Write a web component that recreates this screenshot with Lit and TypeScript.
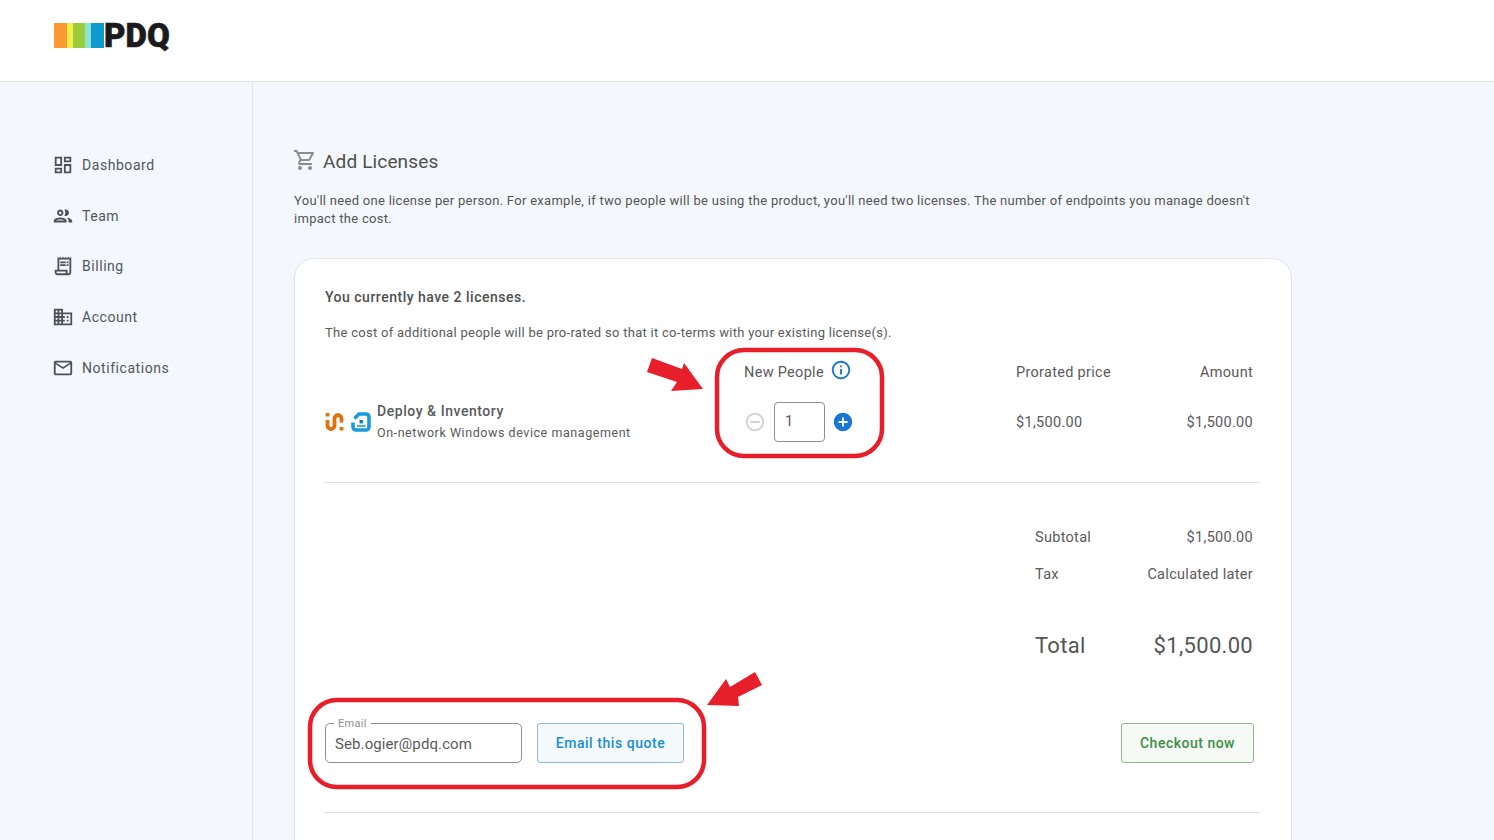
import { LitElement, html, css, svg } from "lit";
import { customElement } from "lit/decorators.js";

const NAV = [
  ["Dashboard", "M19 5v2h-4V5h4M9 5v6H5V5h4m10 8v6h-4v-6h4M9 17v2H5v-2h4M21 3h-8v6h8V3zM11 3H3v10h8V3zm10 8h-8v10h8V11zm-10 4H3v6h8v-6z"],
  ["Team", "M9 13.75c-2.34 0-7 1.17-7 3.5V19h14v-1.75c0-2.33-4.66-3.5-7-3.5zM4.34 17c.84-.58 2.87-1.25 4.66-1.25s3.82.67 4.66 1.25H4.34zM9 12c1.93 0 3.5-1.57 3.5-3.5S10.93 5 9 5 5.5 6.57 5.5 8.5 7.07 12 9 12zm0-5c.83 0 1.5.67 1.5 1.5S9.83 10 9 10s-1.5-.67-1.5-1.5S8.17 7 9 7zm7.04 6.81c1.16.84 1.96 1.96 1.96 3.44V19h4v-1.75c0-2.02-3.5-3.17-5.96-3.44zM15 12c1.93 0 3.5-1.57 3.5-3.5S16.93 5 15 5c-.54 0-1.04.13-1.5.35.63.89 1 1.98 1 3.15s-.37 2.26-1 3.15c.46.22.96.35 1.5.35z"],
  ["Billing", "M19.5 3.5 18 2l-1.5 1.5L15 2l-1.5 1.5L12 2l-1.5 1.5L9 2 7.5 3.5 6 2v14H3v3c0 1.66 1.34 3 3 3h12c1.66 0 3-1.34 3-3V2l-1.5 1.5zM15 20H6c-.55 0-1-.45-1-1v-1h10v2zm4-1c0 .55-.45 1-1 1s-1-.45-1-1v-3H8V5h11v14zM9 7h6v2H9zM16 7h2v2h-2zM9 10h6v2H9zM16 10h2v2h-2z"],
  ["Account", "M12 7V3H2v18h20V7H12zM6 19H4v-2h2v2zm0-4H4v-2h2v2zm0-4H4V9h2v2zm0-4H4V5h2v2zm4 12H8v-2h2v2zm0-4H8v-2h2v2zm0-4H8V9h2v2zm0-4H8V5h2v2zm10 12h-8v-2h2v-2h-2v-2h2v-2h-2V9h8v10zm-2-8h-2v2h2v-2zm0 4h-2v2h2v-2z"],
  ["Notifications", "M20 4H4c-1.1 0-1.99.9-1.99 2L2 18c0 1.1.9 2 2 2h16c1.1 0 2-.9 2-2V6c0-1.1-.9-2-2-2zm0 14H4V8l8 5 8-5v10zm-8-7L4 6h16l-8 5z"],
];

const CART = "M15.55 13c.75 0 1.41-.41 1.75-1.03l3.58-6.49c.37-.66-.11-1.48-.87-1.48H5.21l-.94-2H1v2h2l3.6 7.59-1.35 2.44C4.52 15.37 5.48 17 7 17h12v-2H7l1.1-2h7.45zM6.16 6h12.15l-2.76 5H8.53L6.16 6zM7 18c-1.1 0-1.99.9-1.99 2S5.9 22 7 22s2-.9 2-2-.9-2-2-2zm10 0c-1.1 0-1.99.9-1.99 2s.89 2 1.99 2 2-.9 2-2-.9-2-2-2z";
const INFO = "M11 7h2v2h-2zm0 4h2v6h-2zm1-9C6.48 2 2 6.48 2 12s4.48 10 10 10 10-4.48 10-10S17.52 2 12 2zm0 18c-4.41 0-8-3.59-8-8s3.59-8 8-8 8 3.59 8 8-3.59 8-8 8z";
const MINUS = "M7 11v2h10v-2H7zm5-9C6.48 2 2 6.48 2 12s4.48 10 10 10 10-4.48 10-10S17.52 2 12 2zm0 18c-4.41 0-8-3.59-8-8s3.59-8 8-8 8 3.59 8 8-3.59 8-8 8z";
const PLUS = "M12 2C6.48 2 2 6.48 2 12s4.48 10 10 10 10-4.48 10-10S17.52 2 12 2zm5 11h-4v4h-2v-4H7v-2h4V7h2v4h4v2z";

const icon = (d: string, cls: string) => html`<svg class=${cls} viewBox="0 0 24 24"><path d=${d}></path></svg>`;

@customElement("app-root")
export class AppRoot extends LitElement {
  static styles = css`
    :host { display: block; height: 840px; overflow: hidden; position: relative; background: #f4f8fc; font-family: Roboto, sans-serif; color: #4a4a4a; letter-spacing: 0.4px; }
    svg { display: block; fill: currentColor; flex: none; }
    header { height: 58px; background: #fff; border-bottom: 1px solid #e3e6e9; padding: 23px 0 0 54px; }
    .logo { display: flex; height: 25px; align-items: stretch; }
    .logo i { display: block; }
    .o { width: 13px; background: #fb9a33; }
    .y { width: 6px; background: #f7ee4a; }
    .g { width: 12px; background: #9ccb3b; }
    .c { width: 6px; background: #8fe5d5; }
    .b { width: 13px; background: #0f9bd2; }
    .pdq { font: 900 33px/25px Roboto, sans-serif; letter-spacing: 0.1px; color: #1b1b1d; -webkit-text-stroke: 0.6px #1b1b1d; }
    .body { display: flex; height: 758px; }
    aside { width: 200px; flex: none; border-right: 1px solid #e3e6e9; padding: 58px 0 0 52px; }
    .nav { display: flex; align-items: center; gap: 8px; height: 50.6px; font-size: 14px; color: #50565c; letter-spacing: 0.55px; }
    .nav svg { width: 22px; height: 22px; color: #4c5258; }
    main { flex: 1; padding: 66px 0 0 41px; min-width: 0; }
    .col { width: 998px; }
    h1 { display: flex; align-items: center; gap: 6px; margin: 0; font-size: 19px; font-weight: 400; line-height: 28px; color: #4f4f4f; letter-spacing: 0.15px; }
    h1 svg { width: 24px; height: 24px; color: #8c8c8c; margin-left: -1px; margin-top: -5px; }
    .intro { margin: 16px 0 0; font-size: 13px; line-height: 18px; color: #555; letter-spacing: 0.29px; }
    .card { margin-top: 30px; height: 640px; box-sizing: border-box; background: #fff; border: 1px solid #dfe3e8; border-radius: 20px; padding: 28px 30px 0 30px; }
    .have { font-size: 14px; font-weight: 500; line-height: 20px; letter-spacing: 0.5px; color: #4f4f4f; }
    .cost { margin-top: 17px; font-size: 13px; line-height: 18px; color: #5a5a5a; letter-spacing: 0.28px; }
    .table { display: grid; grid-template-columns: 420px 271px 1fr 137px; width: 936px; margin-top: 15px; }
    .hd { font-size: 14.5px; line-height: 20px; height: 45px; color: #5a5a5a; letter-spacing: 0.3px; display: flex; align-items: flex-start; padding-top: 6px; box-sizing: border-box; }
    .hd.np { gap: 6px; padding-top: 1px; margin-left: -1px; }
    .hd.np span { padding-top: 5px; }
    .hd.np svg { width: 22px; height: 22px; color: #1976d2; margin-top: 1px; }
    .r { justify-content: flex-end; padding-right: 8px; }
    .cell { height: 80px; display: flex; align-items: flex-start; font-size: 14.5px; color: #5a5a5a; line-height: 20px; box-sizing: border-box; letter-spacing: 0.3px; }
    .money { padding-top: 11px; }
    .prod { gap: 6px; margin-top: -1px; }
    .pi { display: flex; gap: 6px; padding-top: 11px; }
    .pi svg { width: 20px; height: 20px; }
    .pname { font-size: 14px; font-weight: 500; line-height: 20px; color: #5a5a5a; letter-spacing: 0.55px; }
    .psub { font-size: 12.5px; line-height: 18px; margin-top: 3px; color: #5a5a5a; letter-spacing: 0.56px; }
    .stepper { display: flex; align-items: center; margin-left: -1px; }
    .stepper svg { width: 22px; height: 22px; }
    .minus { color: #cfd3d6; margin-right: 8px; }
    .plus { color: #1976d2; margin-left: 7px; }
    .qty { width: 51px; height: 40px; box-sizing: border-box; border: 1px solid #8f8f8f; border-radius: 4px; padding: 0 0 0 10px; display: flex; align-items: center; font-size: 14.5px; color: #5a5a5a; }
    hr { border: 0; border-top: 1px solid #e2e2e2; margin: 0 0 0 -1px; width: 936px; }
    .totals { margin-left: 710px; width: 218px; margin-top: 45px; display: grid; grid-template-columns: 1fr auto; row-gap: 17px; font-size: 14.5px; line-height: 20px; color: #5a5a5a; letter-spacing: 0.3px; }
    .totals .r2 { text-align: right; }
    .totals .big { font-size: 22px; line-height: 30px; margin-top: 29px; letter-spacing: 0.3px; color: #555; }
    .actions { margin-top: 62px; display: flex; align-items: center; width: 929px; }
    .field { position: relative; width: 197px; height: 40px; box-sizing: border-box; border: 1px solid #8f8f8f; border-radius: 5px; padding: 1px 9px 0; display: flex; align-items: center; font-size: 15px; color: #5a5a5a; letter-spacing: 0.1px; }
    .field label { position: absolute; left: 8px; top: -6px; background: #fff; padding: 0 4px; font-size: 11px; line-height: 12px; color: #909090; letter-spacing: 0.3px; }
    .btn { height: 40px; box-sizing: border-box; border-radius: 3px; display: flex; align-items: center; justify-content: center; font-size: 14px; font-weight: 500; letter-spacing: 0.55px; }
    .q { width: 147px; margin-left: 15px; background: #f4f9fc; border: 1px solid #8db9dc; color: #1a8fcf; }
    .co { width: 133px; margin-left: auto; background: #f6f9f5; border: 1px solid #93b893; color: #3f8f46; letter-spacing: 0.5px; }
    .last { margin-top: 49px; }
    .marks { position: absolute; left: 0; top: 0; width: 1494px; height: 840px; pointer-events: none; fill: none; }
  `;

  render() {
    return html`
      <header>
        <div class="logo"><i class="o"></i><i class="y"></i><i class="g"></i><i class="c"></i><i class="b"></i><span class="pdq">PDQ</span></div>
      </header>
      <div class="body">
        <aside>
          ${NAV.map(([label, d]) => html`<div class="nav">${icon(d, "")}<span>${label}</span></div>`)}
        </aside>
        <main>
          <div class="col">
            <h1>${icon(CART, "")}Add Licenses</h1>
            <p class="intro">You'll need one license per person. For example, if two people will be using the product, you'll need two licenses. The number of endpoints you manage doesn't impact the cost.</p>
            <section class="card">
              <div class="have">You currently have 2 licenses.</div>
              <div class="cost">The cost of additional people will be pro-rated so that it co-terms with your existing license(s).</div>
              <div class="table">
                <div class="hd"></div>
                <div class="hd np"><span>New People</span>${icon(INFO, "")}</div>
                <div class="hd">Prorated price</div>
                <div class="hd r">Amount</div>
                <div class="cell prod">
                  <div class="pi">
                    <svg viewBox="0 0 20 20" style="fill:none" stroke="#e0720f" stroke-width="3.8">
                      <path d="M2.5 1v3.4M2.5 8v5.5a3.5 3.5 0 0 0 7 0v-7a3.5 3.5 0 0 1 7 0v4M16.5 15v3.6"></path>
                    </svg>
                    <svg viewBox="0 0 20 20" style="fill:none" stroke="#1a9ae0" stroke-width="3.6">
                      <path d="M2 10.5V15a3 3 0 0 0 3 3h10a3 3 0 0 0 3-3V5a3 3 0 0 0-3-3H8L3.5 6.5"></path>
                      <path d="M6 14h8.5" stroke-width="1.6"></path>
                      <rect x="8.5" y="8" width="3.4" height="3.4" fill="#1478b8" stroke="none"></rect>
                    </svg>
                  </div>
                  <div>
                    <div class="pname">Deploy &amp; Inventory</div>
                    <div class="psub">On-network Windows device management</div>
                  </div>
                </div>
                <div class="cell"><div class="stepper">${icon(MINUS, "minus")}<div class="qty">1</div>${icon(PLUS, "plus")}</div></div>
                <div class="cell money">$1,500.00</div>
                <div class="cell money r">$1,500.00</div>
              </div>
              <hr />
              <div class="totals">
                <div>Subtotal</div><div class="r2">$1,500.00</div>
                <div>Tax</div><div class="r2">Calculated later</div>
                <div class="big">Total</div><div class="big r2">$1,500.00</div>
              </div>
              <div class="actions">
                <div class="field"><label>Email</label>Seb.ogier@pdq.com</div>
                <div class="btn q">Email this quote</div>
                <div class="btn co">Checkout now</div>
              </div>
              <hr class="last" />
            </section>
          </div>
        </main>
      </div>
      <svg class="marks" viewBox="0 0 1494 840">
        ${svg`
          <rect x="717" y="350" width="165" height="106" rx="27" stroke="#e71f2a" stroke-width="4.5"></rect>
          <rect x="310" y="700" width="394" height="87" rx="27" stroke="#e71f2a" stroke-width="4.5"></rect>
          <polygon points="652,358 647,372 677,382 671,391 703,389 684,363 682,369" fill="#e71f2a"></polygon>
          <polygon points="755,672 762,685 738,697 739,706 707,705 726,679 730,687" fill="#e71f2a"></polygon>
        `}
      </svg>
    `;
  }
}
